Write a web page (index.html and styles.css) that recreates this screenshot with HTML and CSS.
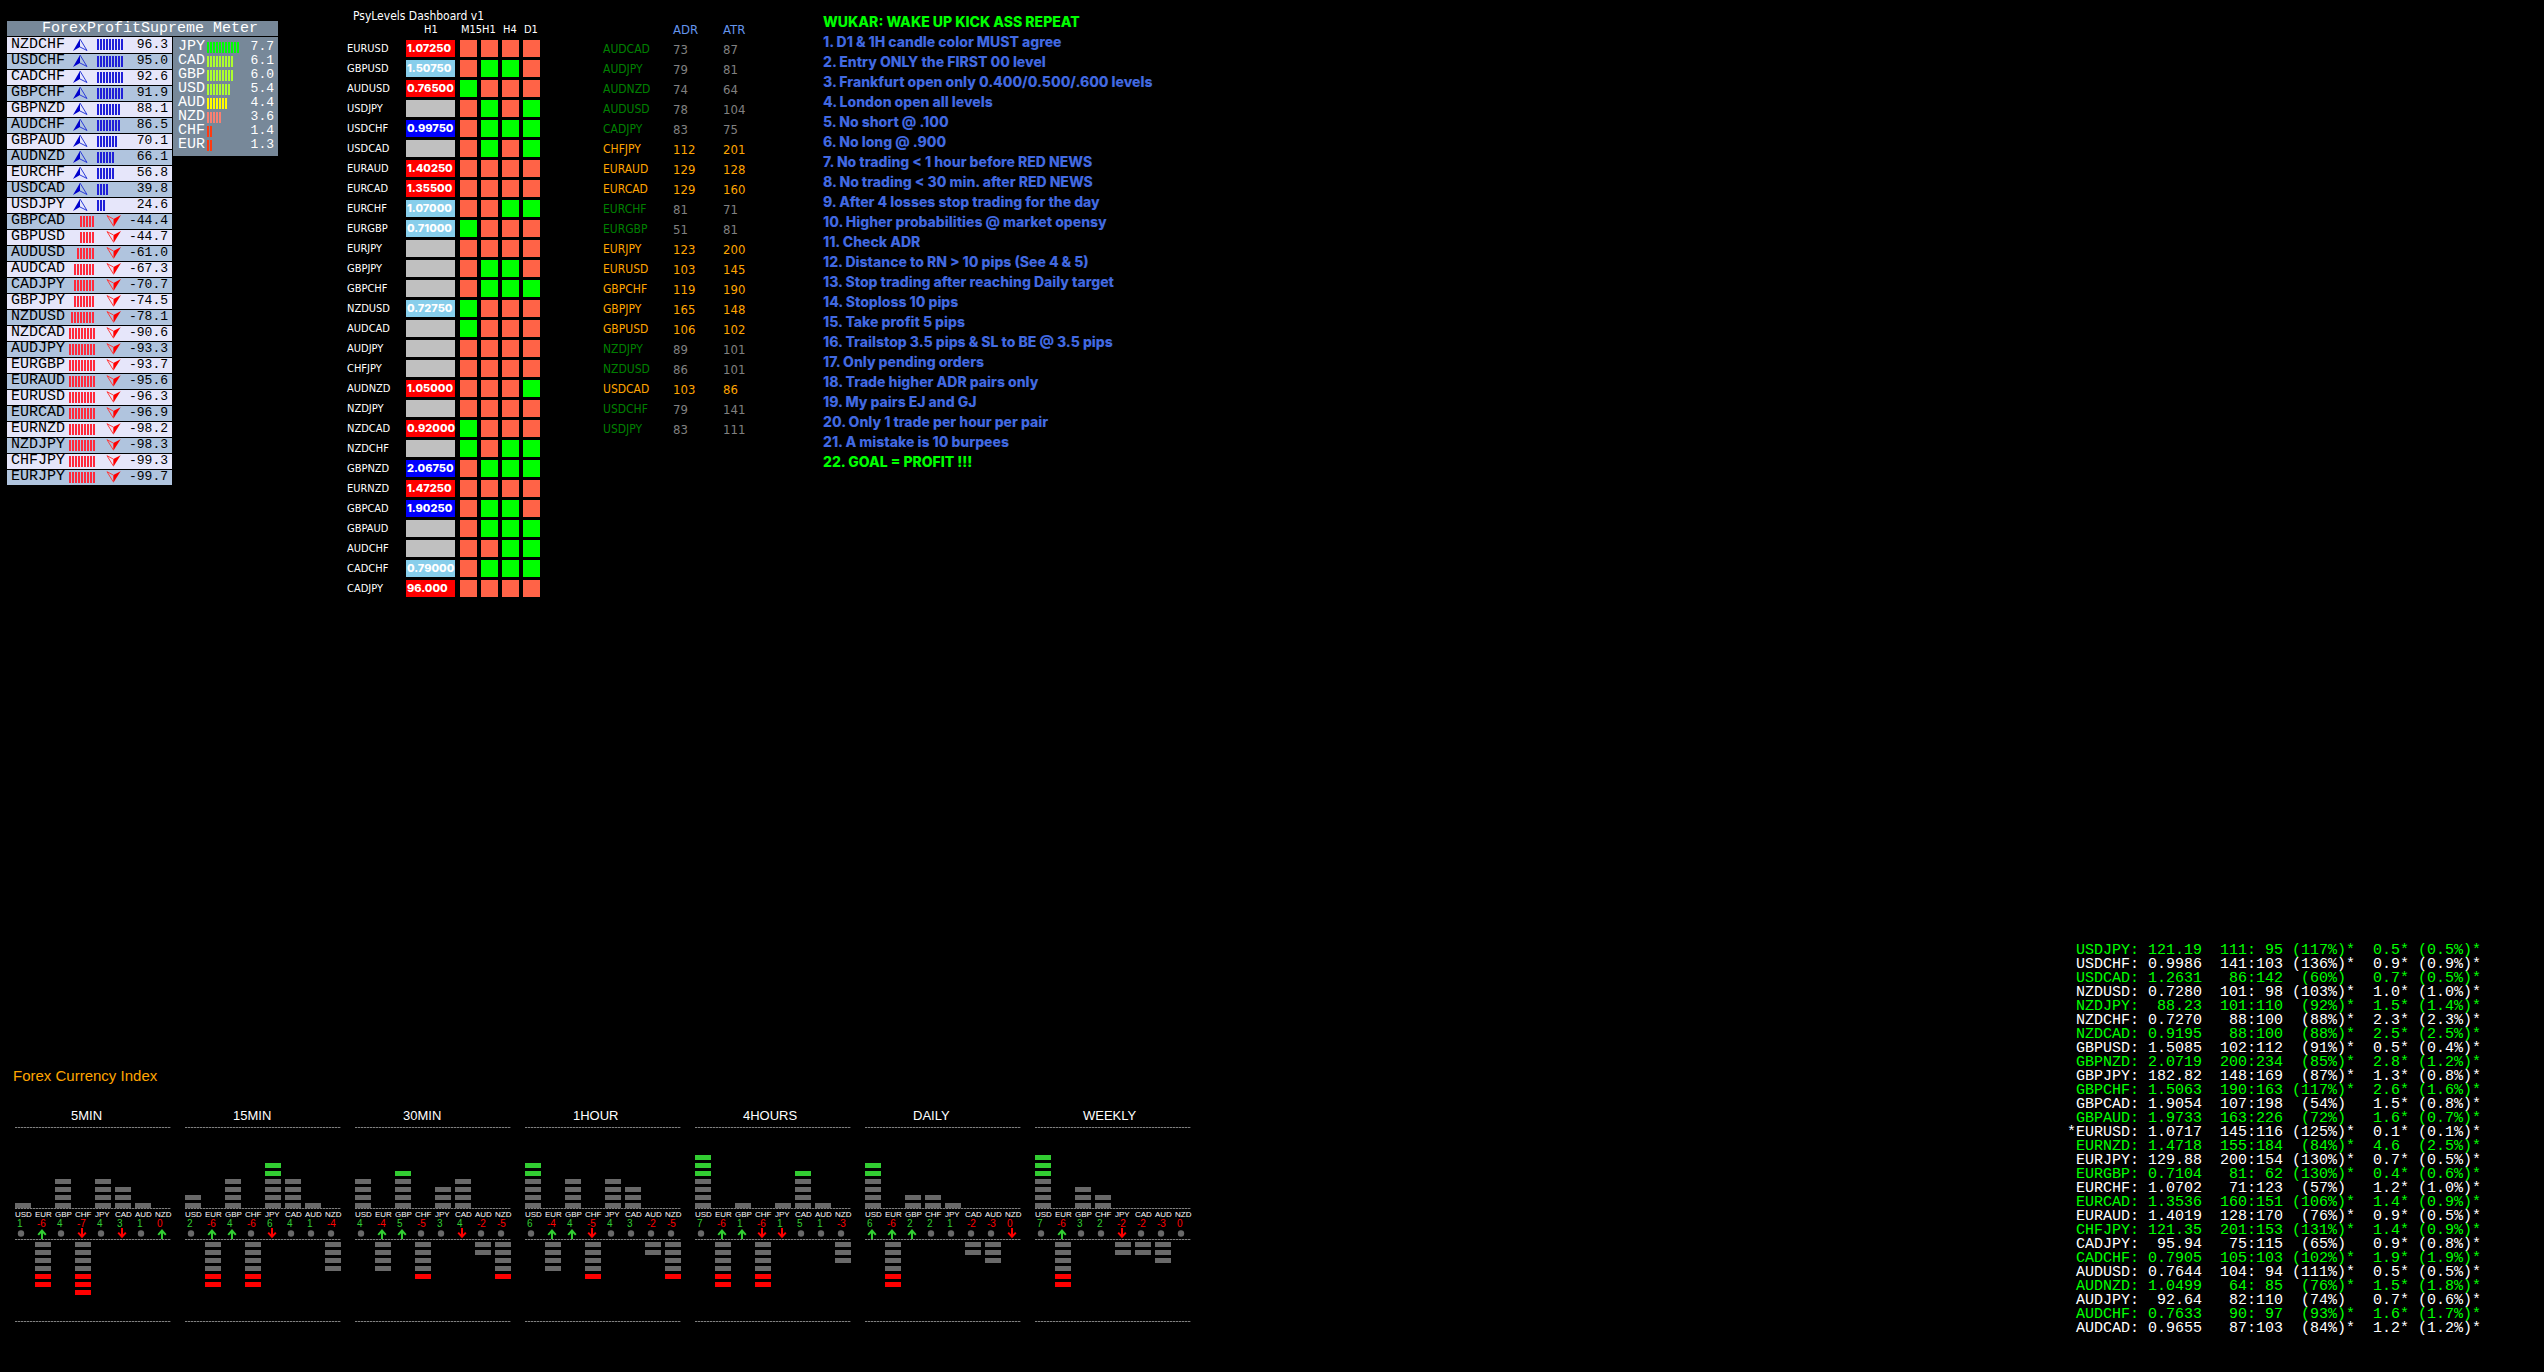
FILE: index.html
```html
<!DOCTYPE html>
<html lang="en">
<head>
  <meta charset="UTF-8" />
  <meta name="viewport" content="width=device-width, initial-scale=1.0" />
  <title>Forex Dashboard</title>
  <link rel="stylesheet" href="styles.css">
</head>
<body>
  <main class="top">
    <section class="meter">
      <h2 class="meter-title">ForexProfitSupreme Meter</h2>
      <div class="meter-body">
        <table class="pairs"><tbody id="pairs"></tbody></table>
        <table class="strength"><tbody id="strength"></tbody></table>
      </div>
    </section>

    <section class="psy">
      <h2 class="psy-title">PsyLevels Dashboard v1</h2>
      <table class="levels">
        <thead>
          <tr><th class="sym"></th><th class="price">H1</th><th>M15</th><th>H1</th><th>H4</th><th>D1</th></tr>
        </thead>
        <tbody id="levels"></tbody>
      </table>
    </section>

    <section class="range">
      <table>
        <thead>
          <tr><th class="sym"></th><th class="adr">ADR</th><th class="atr">ATR</th></tr>
        </thead>
        <tbody id="ranges"></tbody>
      </table>
    </section>

    <section class="rules">
      <h2>WUKAR: WAKE UP KICK ASS REPEAT</h2>
      <ol>
        <li>1. D1 &amp; 1H candle color MUST agree</li>
        <li>2. Entry ONLY the FIRST 00 level</li>
        <li>3. Frankfurt open only 0.400/0.500/.600 levels</li>
        <li>4. London open all levels</li>
        <li>5. No short @ .100</li>
        <li>6. No long @ .900</li>
        <li>7. No trading &lt; 1 hour before RED NEWS</li>
        <li>8. No trading &lt; 30 min. after RED NEWS</li>
        <li>9. After 4 losses stop trading for the day</li>
        <li>10. Higher probabilities @ market opensy</li>
        <li>11. Check ADR</li>
        <li>12. Distance to RN &gt; 10 pips (See 4 &amp; 5)</li>
        <li>13. Stop trading after reaching Daily target</li>
        <li>14. Stoploss 10 pips</li>
        <li>15. Take profit 5 pips</li>
        <li>16. Trailstop 3.5 pips &amp; SL to BE @ 3.5 pips</li>
        <li>17. Only pending orders</li>
        <li>18. Trade higher ADR pairs only</li>
        <li>19. My pairs EJ and GJ</li>
        <li>20. Only 1 trade per hour per pair</li>
        <li>21. A mistake is 10 burpees</li>
        <li class="goal">22. GOAL = PROFIT !!!</li>
      </ol>
    </section>
  </main>

  <footer class="bottom">
    <section class="index">
      <h2>Forex Currency Index</h2>
      <div class="frames" id="frames"></div>
    </section>
    <table class="quotes"><tbody id="quotes"></tbody></table>
  </footer>

  <script src="script.js"></script>
</body>
</html>
```

FILE: styles.css
```css
* {
  box-sizing: border-box;
}
body {
  margin: 0;
  min-height: 100vh;
  display: flex;
  flex-direction: column;
  justify-content: space-between;
  background: #000;
  color: #fff;
  font-family: "DejaVu Sans Condensed", "DejaVu Sans", sans-serif;
}
h2, ol {
  margin: 0;
  padding: 0;
}
h2 {
  font-weight: normal;
}
table {
  border-collapse: collapse;
}
td, th {
  padding: 0;
  font-weight: normal;
  text-align: left;
  white-space: nowrap;
}
svg {
  display: block;
}

.top {
  display: grid;
  grid-template-columns: 340px 256px 220px auto;
  align-items: start;
  padding-left: 7px;
}

/* strength meter */
.meter {
  width: 271px;
  margin-top: 21px;
  font-family: "Liberation Mono", monospace;
  font-size: 15px;
}
.meter-title {
  height: 15px;
  line-height: 15px;
  font-size: 15px;
  padding-left: 35px;
  background: #778899;
}
.meter-body {
  display: flex;
  align-items: flex-start;
  justify-content: space-between;
  padding-top: 1px;
}
.pairs {
  width: 165px;
  color: #000;
}
.pairs tr {
  height: 16px;
  line-height: 14px;
  background: #e6e6fa;
  border-bottom: 1px solid #000;
}
.pairs tr:nth-child(even) {
  background: #b0c4de;
}
.pairs .sym {
  width: 62px;
  padding-left: 4px;
}
.gauge {
  display: flex;
  align-items: center;
  width: 54px;
  height: 14px;
}
.down .gauge {
  width: 52px;
  justify-content: flex-end;
  gap: 11px;
}
.up .gauge {
  margin-left: 4px;
  gap: 9px;
}
.ticks {
  height: 11px;
  background: repeating-linear-gradient(90deg, currentColor 0 2px, transparent 2px 3px);
}
.up .ticks {
  color: #2020d8;
}
.down .ticks {
  color: #ff2a3c;
}
.num {
  font-size: 13px;
  text-align: right;
  padding-right: 4px;
}
.strength {
  width: 105px;
  background: #778899;
  border-top: 3px solid #778899;
  border-bottom: 4px solid #778899;
}
.strength tr {
  height: 14px;
  line-height: 14px;
}
.strength .sym {
  width: 34px;
  padding-left: 5px;
}

/* psy levels */
.psy {
  padding-top: 9px;
}
.psy-title {
  padding-left: 6px;
  font-size: 12px;
  line-height: 15px;
}
.levels {
  table-layout: fixed;
  width: 197px;
  font-size: 11px;
}
.levels th {
  width: 21px;
  height: 14px;
  line-height: 12px;
  padding-left: 1px;
  vertical-align: top;
}
.levels th.sym {
  width: 59px;
}
.levels th.price {
  width: 54px;
  padding-left: 18px;
}
.levels td {
  height: 20px;
  line-height: 19px;
}
.levels .box {
  display: block;
  width: 17px;
  height: 17px;
  background: #ff6347;
}
.levels .box.on {
  background: #00ff00;
}
.levels .box.level {
  width: 49px;
  padding-left: 1px;
  font: 800 11px/17px Inter, sans-serif;
  background: #c0c0c0;
}
.levels .box.red {
  background: #ff0000;
}
.levels .box.sky {
  background: #87ceeb;
}
.levels .box.blue {
  background: #0000ff;
}

/* adr / atr */
.range {
  padding-top: 19px;
  font-size: 13px;
}
.range tr {
  height: 20px;
  color: #808080;
}
.range .sym {
  width: 70px;
  font-size: 12px;
  color: #008000;
}
.range .adr {
  width: 50px;
}
.range th {
  color: #6495ed;
}
.range .hot, .range .hot .sym {
  color: #ffa500;
}

.rules {
  padding-top: 12px;
  font-family: Inter, "Liberation Sans", sans-serif;
  font-size: 14px;
  font-weight: 800;
  line-height: 20px;
  color: #4169e1;
}
.rules h2 {
  font-size: 14px;
  font-weight: 800;
}
.rules ol {
  list-style: none;
}
.rules h2, .rules .goal {
  color: #00ff00;
}

.bottom {
  display: flex;
  justify-content: space-between;
  align-items: flex-end;
  padding: 0 63px 36px 13px;
}

/* currency index */
.index {
  padding-bottom: 14px;
  font-family: "Liberation Sans", sans-serif;
}
.index h2 {
  font-size: 15px;
  line-height: 20px;
  color: #ffa500;
}
.frames {
  display: flex;
  gap: 14px;
  padding: 22px 0 0 2px;
}
.frame {
  width: 156px;
}
.frame h3 {
  margin: 0 0 3px;
  padding-left: 48px;
  font-size: 13px;
  font-weight: normal;
  line-height: 16px;
}
.frame:first-child h3 {
  padding-left: 56px;
}
.rule {
  height: 1px;
  background: repeating-linear-gradient(90deg, #808080 0 2px, #303030 2px 3px);
}
.row {
  display: flex;
  gap: 4px;
}
.stack {
  width: 16px;
  display: flex;
  flex-direction: column;
  gap: 3px;
}
.stack i {
  height: 5px;
  background: #696969;
}
.above {
  height: 80px;
}
.above .stack {
  flex-direction: column-reverse;
}
.below {
  height: 81px;
  padding-top: 2px;
}
.above i.far {
  background: #32cd32;
}
.below i.far {
  background: #ff0000;
}
.readings {
  height: 30px;
  padding-top: 2px;
}
.reading {
  width: 16px;
  font-size: 8px;
  line-height: 8px;
}
.reading b {
  display: block;
  padding-left: 2px;
  font-size: 10px;
  font-weight: normal;
  line-height: 9px;
  color: #32cd32;
}
.reading b.neg {
  color: #ff0000;
}
.reading svg {
  margin-left: 2px;
}

.quotes {
  font-family: "Liberation Mono", monospace;
  font-size: 15px;
}
.quotes tr {
  height: 14px;
  line-height: 14px;
}
.quotes tr:nth-child(odd) {
  color: #00ff00;
}
.quotes td {
  padding-right: 9px;
  text-align: right;
  white-space: pre;
}
.quotes td.wide {
  padding-right: 18px;
}
.quotes td:last-child {
  padding-right: 0;
}
```

FILE: script.js
```js
const el = id => document.getElementById(id);

const arrowUp = `<svg width="15" height="12" viewBox="0 0 15 12"><path d="M7 0V8L0 12Z" fill="#0000cd"/><path d="M7 0L14 11.5L7 8" fill="none" stroke="#2a3ad8" stroke-width="1"/></svg>`;
const arrowDown = `<svg width="15" height="12" viewBox="0 0 15 12"><path d="M15 0L7.5 4V12Z" fill="#ff0000"/><path d="M7.5 4L1 .6L7.5 11" fill="none" stroke="#ff3a3a" stroke-width="1"/></svg>`;

// symbol, strength, number of ticks
const pairs = [
  ['NZDCHF', '96.3', 9], ['USDCHF', '95.0', 9], ['CADCHF', '92.6', 9], ['GBPCHF', '91.9', 9],
  ['GBPNZD', '88.1', 8], ['AUDCHF', '86.5', 8], ['GBPAUD', '70.1', 7], ['AUDNZD', '66.1', 6],
  ['EURCHF', '56.8', 6], ['USDCAD', '39.8', 4], ['USDJPY', '24.6', 3], ['GBPCAD', '-44.4', 5],
  ['GBPUSD', '-44.7', 5], ['AUDUSD', '-61.0', 6], ['AUDCAD', '-67.3', 7], ['CADJPY', '-70.7', 7],
  ['GBPJPY', '-74.5', 7], ['NZDUSD', '-78.1', 8], ['NZDCAD', '-90.6', 9], ['AUDJPY', '-93.3', 9],
  ['EURGBP', '-93.7', 9], ['EURAUD', '-95.6', 9], ['EURUSD', '-96.3', 9], ['EURCAD', '-96.9', 9],
  ['EURNZD', '-98.2', 9], ['NZDJPY', '-98.3', 9], ['CHFJPY', '-99.3', 9], ['EURJPY', '-99.7', 9]
];
el('pairs').innerHTML = pairs.map(([s, v, n]) => {
  const up = v[0] !== '-';
  const ticks = `<span class="ticks" style="width:${n * 3}px"></span>`;
  return `<tr class="${up ? 'up' : 'down'}"><td class="sym">${s}</td>
    <td><div class="gauge">${up ? arrowUp + ticks : ticks + arrowDown}</div></td>
    <td class="num">${v}</td></tr>`;
}).join('');

const strength = [
  ['JPY', '7.7', 11, '#00ff00'], ['CAD', '6.1', 9, '#adff2f'], ['GBP', '6.0', 9, '#adff2f'],
  ['USD', '5.4', 8, '#adff2f'], ['AUD', '4.4', 7, '#ffff00'], ['NZD', '3.6', 5, '#fa8072'],
  ['CHF', '1.4', 2, '#ff3a10'], ['EUR', '1.3', 2, '#ff3a10']
];
el('strength').innerHTML = strength.map(([s, v, n, c]) =>
  `<tr><td class="sym">${s}</td><td><div class="ticks" style="width:${n * 3}px;color:${c}"></div></td>
    <td class="num">${v}</td></tr>`).join('');

// symbol, level colour, level, M15/H1/H4/D1 flags
const levels = [
  ['EURUSD', 'red', '1.07250', '0000'], ['GBPUSD', 'sky', '1.50750', '0110'],
  ['AUDUSD', 'red', '0.76500', '1000'], ['USDJPY', '', '', '0101'],
  ['USDCHF', 'blue', '0.99750', '0111'], ['USDCAD', '', '', '0101'],
  ['EURAUD', 'red', '1.40250', '0000'], ['EURCAD', 'red', '1.35500', '0000'],
  ['EURCHF', 'sky', '1.07000', '0011'], ['EURGBP', 'sky', '0.71000', '1000'],
  ['EURJPY', '', '', '0000'], ['GBPJPY', '', '', '0110'],
  ['GBPCHF', '', '', '0111'], ['NZDUSD', 'sky', '0.72750', '1000'],
  ['AUDCAD', '', '', '1000'], ['AUDJPY', '', '', '0000'],
  ['CHFJPY', '', '', '0000'], ['AUDNZD', 'red', '1.05000', '0001'],
  ['NZDJPY', '', '', '0000'], ['NZDCAD', 'red', '0.92000', '1000'],
  ['NZDCHF', '', '', '1011'], ['GBPNZD', 'blue', '2.06750', '0111'],
  ['EURNZD', 'red', '1.47250', '0000'], ['GBPCAD', 'blue', '1.90250', '0110'],
  ['GBPAUD', '', '', '0111'], ['AUDCHF', '', '', '0011'],
  ['CADCHF', 'sky', '0.79000', '0111'], ['CADJPY', 'red', '96.000', '0000']
];
el('levels').innerHTML = levels.map(([s, c, v, f]) =>
  `<tr><td>${s}</td><td><span class="box level ${c}">${v}</span></td>` +
  [...f].map(x => `<td><span class="box${x === '1' ? ' on' : ''}"></span></td>`).join('') +
  '</tr>').join('');

const ranges = [
  ['AUDCAD', 73, 87], ['AUDJPY', 79, 81], ['AUDNZD', 74, 64], ['AUDUSD', 78, 104],
  ['CADJPY', 83, 75], ['CHFJPY', 112, 201], ['EURAUD', 129, 128], ['EURCAD', 129, 160],
  ['EURCHF', 81, 71], ['EURGBP', 51, 81], ['EURJPY', 123, 200], ['EURUSD', 103, 145],
  ['GBPCHF', 119, 190], ['GBPJPY', 165, 148], ['GBPUSD', 106, 102], ['NZDJPY', 89, 101],
  ['NZDUSD', 86, 101], ['USDCAD', 103, 86], ['USDCHF', 79, 141], ['USDJPY', 83, 111]
];
// ADR of 100 pips or more is highlighted
el('ranges').innerHTML = ranges.map(([s, adr, atr]) =>
  `<tr class="${adr >= 100 ? 'hot' : ''}"><td class="sym">${s}</td><td>${adr}</td><td>${atr}</td></tr>`).join('');

const currencies = ['USD', 'EUR', 'GBP', 'CHF', 'JPY', 'CAD', 'AUD', 'NZD'];
const marks = {
  o: '<svg width="10" height="11" viewBox="0 0 10 11"><circle cx="4" cy="5.5" r="3.2" fill="#696969"/></svg>',
  u: '<svg width="10" height="11" viewBox="0 0 10 11"><path d="M5 11V3M1.2 6.8L5 2.6L8.8 6.8" fill="none" stroke="#32cd32" stroke-width="2"/></svg>',
  d: '<svg width="10" height="11" viewBox="0 0 10 11"><path d="M5 0V8M1.2 4.6L5 8.8L8.8 4.6" fill="none" stroke="#ff0000" stroke-width="2"/></svg>'
};
// title, values, o = flat, u = rising, d = falling
const frames = [
  ['5MIN', [1, -6, 4, -7, 4, 3, 1, 0], 'ouododou'],
  ['15MIN', [2, -6, 4, -6, 6, 4, 1, -4], 'ouuodooo'],
  ['30MIN', [4, -4, 5, -5, 3, 4, -2, -5], 'ouuoodoo'],
  ['1HOUR', [6, -4, 4, -5, 4, 3, -2, -5], 'ouudoooo'],
  ['4HOURS', [7, -6, 1, -6, 1, 5, 1, -3], 'ouuddooo'],
  ['DAILY', [6, -6, 2, 2, 1, -2, -3, 0], 'uuuooood'],
  ['WEEKLY', [7, -6, 3, 2, -2, -2, -3, 0], 'ouoodooo']
];
function stack(n) {
  let out = '';
  for (let i = 0; i < n; i++) out += `<i class="${i > 3 ? 'far' : ''}"></i>`;
  return `<div class="stack">${out}</div>`;
}
el('frames').innerHTML = frames.map(([t, vals, m]) => `
  <div class="frame">
    <h3>${t}</h3>
    <div class="rule"></div>
    <div class="row above">${vals.map(v => stack(v)).join('')}</div>
    <div class="rule"></div>
    <div class="row readings">${vals.map((v, i) =>
      `<div class="reading">${currencies[i]}<b class="${v > 0 ? '' : 'neg'}">${v}</b>${marks[m[i]]}</div>`).join('')}</div>
    <div class="rule"></div>
    <div class="row below">${vals.map(v => stack(-v)).join('')}</div>
    <div class="rule"></div>
  </div>`).join('');

const quotes = `
USDJPY|121.19|111: 95|(117%)*|0.5*|(0.5%)*
USDCHF|0.9986|141:103|(136%)*|0.9*|(0.9%)*
USDCAD|1.2631|86:142|(60%) |0.7*|(0.5%)*
NZDUSD|0.7280|101: 98|(103%)*|1.0*|(1.0%)*
NZDJPY|88.23|101:110|(92%)*|1.5*|(1.4%)*
NZDCHF|0.7270|88:100|(88%)*|2.3*|(2.3%)*
NZDCAD|0.9195|88:100|(88%)*|2.5*|(2.5%)*
GBPUSD|1.5085|102:112|(91%)*|0.5*|(0.4%)*
GBPNZD|2.0719|200:234|(85%)*|2.8*|(1.2%)*
GBPJPY|182.82|148:169|(87%)*|1.3*|(0.8%)*
GBPCHF|1.5063|190:163|(117%)*|2.6*|(1.6%)*
GBPCAD|1.9054|107:198|(54%) |1.5*|(0.8%)*
GBPAUD|1.9733|163:226|(72%) |1.6*|(0.7%)*
*EURUSD|1.0717|145:116|(125%)*|0.1*|(0.1%)*
EURNZD|1.4718|155:184|(84%)*|4.6 |(2.5%)*
EURJPY|129.88|200:154|(130%)*|0.7*|(0.5%)*
EURGBP|0.7104|81: 62|(130%)*|0.4*|(0.6%)*
EURCHF|1.0702|71:123|(57%) |1.2*|(1.0%)*
EURCAD|1.3536|160:151|(106%)*|1.4*|(0.9%)*
EURAUD|1.4019|128:170|(76%)*|0.9*|(0.5%)*
CHFJPY|121.35|201:153|(131%)*|1.4*|(0.9%)*
CADJPY|95.94|75:115|(65%) |0.9*|(0.8%)*
CADCHF|0.7905|105:103|(102%)*|1.9*|(1.9%)*
AUDUSD|0.7644|104: 94|(111%)*|0.5*|(0.5%)*
AUDNZD|1.0499|64: 85|(76%)*|1.5*|(1.8%)*
AUDJPY|92.64|82:110|(74%) |0.7*|(0.6%)*
AUDCHF|0.7633|90: 97|(93%)*|1.6*|(1.7%)*
AUDCAD|0.9655|87:103|(84%)*|1.2*|(1.2%)*`;
el('quotes').innerHTML = quotes.trim().split('\n').map(line => {
  const [s, price, pips, pct, spread, cost] = line.split('|');
  return `<tr><td>${s}:</td><td class="wide">${price}</td><td>${pips}</td>` +
    `<td class="wide">${pct}</td><td>${spread}</td><td>${cost}</td></tr>`;
}).join('');
```
